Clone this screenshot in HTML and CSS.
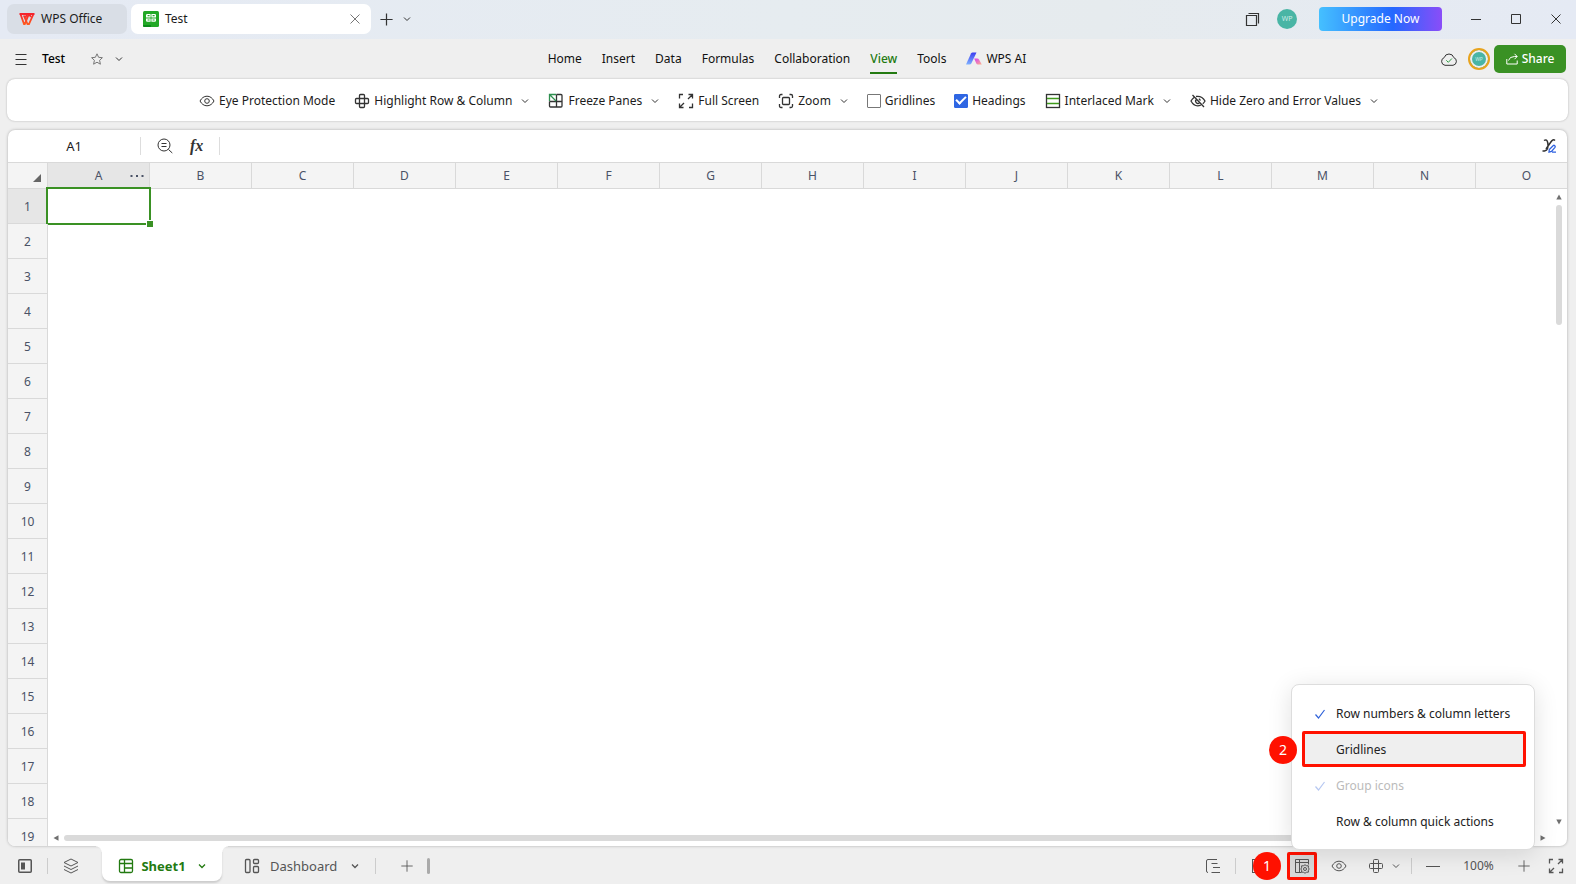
FILE: index.html
```
<!DOCTYPE html>
<html lang="en">
<head>
<meta charset="utf-8">
<title>Test - WPS Office</title>
<link rel="stylesheet" href="styles.css">
</head>
<body>
<svg class="sprite" aria-hidden="true">
  <defs>
    <linearGradient id="g-wps" x1="0" y1="0" x2="0" y2="1"><stop offset="0" stop-color="#f5222d"/><stop offset="1" stop-color="#ff5a1f"/></linearGradient>
    <linearGradient id="g-ai" x1="0" y1="0" x2="0" y2="1"><stop offset="0" stop-color="#3a3cf0"/><stop offset="1" stop-color="#7fb2ff"/></linearGradient>
    <linearGradient id="g-ai2" x1="0" y1="0" x2="1" y2="1"><stop offset="0" stop-color="#d63cf5"/><stop offset="1" stop-color="#ffb38a"/></linearGradient>
  </defs>
  <symbol id="chev" viewBox="0 0 8 8"><path d="M1 2.500 4 5.500 7 2.500"/></symbol>
  <symbol id="eye" viewBox="0 0 16 16"><path d="M1 8C2.600 5 5 3.200 8 3.200S13.400 5 15 8C13.400 11 11 12.800 8 12.800S2.600 11 1 8Z"/><circle cx="8" cy="8" r="2.300"/></symbol>
  <symbol id="cross" viewBox="0 0 16 16"><rect x="5.500" y="1.500" width="5" height="13" rx="1"/><rect x="1.500" y="5.500" width="13" height="5" rx="1"/></symbol>
  <symbol id="full" viewBox="0 0 16 16"><path d="M1.500 5.500v-4H5M10.500 1.500h4v4M14.300 1.700 10 6M14.500 10.500v4H11M5.500 14.500h-4v-4M1.700 14.300 6 10"/></symbol>
  <symbol id="plus" viewBox="0 0 16 16"><path d="M8 1.500v13M1.500 8h13"/></symbol>
  <symbol id="check" viewBox="0 0 12 12"><path d="M1.500 6.500 4.500 10 10.500 2"/></symbol>
</svg>

<div class="app">
  <header class="titlebar">
    <button class="tab home-tab" type="button">
      <svg class="i16" viewBox="0 0 16 16"><path d="M.500 3H15.500M1.500 3 5 13H5.800L9.500 4M4.800 4.500 8.500 13H10L14.500 3M6.500 6.500 8 3M11.800 6 10.300 3" fill="none" stroke="url(#g-wps)" stroke-width="1.800"/></svg>
      WPS Office
    </button>
    <div class="tab file-tab">
      <svg class="i16 solid" viewBox="0 0 16 16"><rect width="16" height="16" rx="1.500" fill="#22a826"/><path d="M0 14h8v2H1.500Q0 16 0 15Z" fill="#0c8a1a"/><path d="M3 4.200Q3 3 4.200 3H7.600V6.400H3ZM8.400 3H11.800Q13 3 13 4.200V6.400H8.400ZM3 7.400H7.600V10.800H4.200Q3 10.800 3 9.600ZM8.400 7.400H13V9.600Q13 10.800 11.800 10.800H8.400Z" fill="#fff"/><path d="M4.600 4.700h2M9.600 4.700h2M4.600 9h2M9.600 9h2" class="green-line"/></svg>
      <span class="grow">Test</span>
      <button class="plain" type="button" aria-label="Close tab"><svg class="i10 gray" viewBox="0 0 10 10"><path d="M.500.500l9 9M9.500.500l-9 9"/></svg></button>
    </div>
    <button class="plain new-tab" type="button" aria-label="New tab"><svg class="i16 bold"><use href="#plus"/></svg></button>
    <button class="plain" type="button" aria-label="Tab list"><svg class="i8"><use href="#chev"/></svg></button>
    <div class="window-tools">
      <button class="plain" type="button" aria-label="Windows"><svg class="i16" viewBox="0 0 16 16"><path d="M1.500 4.500h10v10h-10zM3.500 2.500h10v10" stroke-width="1.200"/></svg></button>
      <span class="avatar">WP</span>
      <button class="upgrade" type="button">Upgrade Now</button>
      <div class="window-buttons">
        <button class="plain" type="button" aria-label="Minimize"><svg class="i10" viewBox="0 0 10 10"><path d="M0 5.500h10"/></svg></button>
        <button class="plain" type="button" aria-label="Maximize"><svg class="i10" viewBox="0 0 10 10"><path d="M.500.500h9v9h-9z"/></svg></button>
        <button class="plain" type="button" aria-label="Close"><svg class="i10" viewBox="0 0 10 10"><path d="M.500.500l9 9M9.500.500l-9 9"/></svg></button>
      </div>
    </div>
  </header>

  <div class="menubar">
    <div class="doc">
      <button class="plain" type="button" aria-label="Menu"><svg class="i12" viewBox="0 0 12 12"><path d="M.500 1.500h11M.500 6.500h11M.500 11.500h11"/></svg></button>
      <span class="doc-name">Test</span>
      <button class="plain" type="button" aria-label="Favorite"><svg class="i12 gray" viewBox="0 0 12 12"><path d="M6 .800 7.600 4.300 11.400 4.700 8.600 7.300 9.400 11.200 6 9.200 2.600 11.200 3.400 7.300.600 4.700 4.400 4.300Z"/></svg></button>
      <button class="plain doc-more" type="button" aria-label="More"><svg class="i8"><use href="#chev"/></svg></button>
    </div>
    <nav class="menus">
      <a href="#">Home</a><a href="#">Insert</a><a href="#">Data</a><a href="#">Formulas</a><a href="#">Collaboration</a><a href="#" class="active">View</a><a href="#">Tools</a>
      <a href="#" class="ai"><svg class="i16" viewBox="0 0 16 14"><path d="M0 12.500 5 1.500Q5.500 .500 6.700.500H10.500L5.300 11.500Q4.800 12.500 3.500 12.500Z" fill="url(#g-ai)" stroke="none"/><path d="M8.200 6.500h3.100Q12.500 6.500 13 7.500L15.800 12.500H12Q10.800 12.500 10.300 11.500Z" fill="url(#g-ai2)" stroke="none"/></svg>WPS AI</a>
    </nav>
    <div class="account">
      <svg class="cloud" viewBox="0 0 18 16"><path d="M5 14.300a4 4 0 0 1-.800-7.700A5 5 0 0 1 13.800 6.600 4 4 0 0 1 13 14.300Z"/><path d="M6.300 9.300l2 2 3.600-3.800" stroke="#2f9e44"/></svg>
      <span class="avatar ringed">WP</span>
      <button class="share" type="button"><svg class="i12" viewBox="0 0 12 12"><path d="M.800 6v5h10.400V7.500M2.500 7.500Q3.500 3.500 8.500 3.500H11M8.500.800 11.200 3.500 8.500 6.200"/></svg>Share</button>
    </div>
  </div>

  <div class="ribbon">
    <button class="tool" type="button"><svg class="i16"><use href="#eye"/></svg>Eye Protection Mode</button>
    <button class="tool" type="button"><svg class="i16 bold"><use href="#cross"/></svg>Highlight Row &amp; Column<svg class="i8 drop"><use href="#chev"/></svg></button>
    <button class="tool" type="button"><svg class="i16 bold" viewBox="0 0 16 16"><path d="M8.500 1.500H13Q14 1.500 14 2.500V13Q14 14 13 14H2.500Q1.500 14 1.500 13V8.500M1.500 8.500H14M8.500 1.500V14"/><path d="M1.500 8V1.500H8M2 2 8 8" stroke="#2f8f4f"/></svg>Freeze Panes<svg class="i8 drop"><use href="#chev"/></svg></button>
    <button class="tool" type="button"><svg class="i16 bold"><use href="#full"/></svg>Full Screen</button>
    <button class="tool" type="button"><svg class="i16 bold" viewBox="0 0 16 16"><rect x="4.500" y="4.500" width="7" height="7" rx="1"/><path d="M1.500 5V3Q1.500 1.500 3 1.500H4.500M11.500 1.500H13Q14.500 1.500 14.500 3V5M14.500 11V13Q14.500 14.500 13 14.500H11.500M4.500 14.500H3Q1.500 14.500 1.500 13V11"/></svg>Zoom<svg class="i8 drop"><use href="#chev"/></svg></button>
    <label class="tool"><input type="checkbox">Gridlines</label>
    <label class="tool"><input type="checkbox" checked>Headings</label>
    <button class="tool" type="button"><svg class="i16 bold" viewBox="0 0 16 16"><rect x="1.500" y="1.500" width="13" height="13"/><path d="M2 5.500h12M2 10.500h12" stroke="#3f9a1c"/></svg>Interlaced Mark<svg class="i8 drop"><use href="#chev"/></svg></button>
    <button class="tool" type="button"><svg class="i16 bold" viewBox="0 0 16 16"><path d="M4 4.600Q2.200 6 1 8C3.500 12.500 7.500 13.600 11 12M6 3.500Q11.800 2.500 15 8 14.200 9.600 12.800 10.800M2.500 2 14 14M6.300 6.500a2.300 2.300 0 0 0 3.200 3.300M8.800 5.800a2.300 2.300 0 0 1 1.500 1.800"/></svg>Hide Zero and Error Values<svg class="i8 drop"><use href="#chev"/></svg></button>
  </div>

  <main class="sheet">
    <div class="formula-bar">
      <input class="name-box" type="text" value="A1" aria-label="Name box">
      <button class="plain search" type="button" aria-label="Find"><svg class="i16" viewBox="0 0 16 16"><circle cx="7" cy="7" r="6"/><path d="M11.500 11.500 15.300 15M4.500 5.500h5M4.500 8.500h5"/></svg></button>
      <button class="plain fx" type="button">fx</button>
      <input class="formula" type="text" aria-label="Formula">
      <button class="plain" type="button" aria-label="Edit formula"><svg class="i16" viewBox="0 0 16 16"><path d="M3 2.500Q6 .500 6.800 5 8 12 3.500 13H1.500M14 2.500Q12 .500 9.500 4.500L5 11" stroke-width="1.500"/><path d="M8 14.200 8.300 11.500 12.300 7.500Q13 7 13.800 7.700 14.600 8.500 14 9.300L10.500 13.500 8 14.200ZM11 14.200h4" stroke="#2f62e0" stroke-width="1.300"/></svg></button>
    </div>
    <div class="grid-area">
      <table class="grid">
        <thead><tr>
          <th class="corner" scope="col" aria-label="Select all"><svg class="i8" viewBox="0 0 8 8"><path d="M8 0v8H0z" fill="#666" stroke="none"/></svg></th>
          <th class="sel" scope="col">A<button class="plain dots" type="button" aria-label="Column options"><svg viewBox="0 0 14 4"><path d="M.500 1h2v2h-2zM6 1h2v2h-2zM11.500 1h2v2h-2z" fill="#4a5266" stroke="none"/></svg></button></th>
          <th scope="col">B</th><th scope="col">C</th><th scope="col">D</th><th scope="col">E</th><th scope="col">F</th><th scope="col">G</th><th scope="col">H</th><th scope="col">I</th><th scope="col">J</th><th scope="col">K</th><th scope="col">L</th><th scope="col">M</th><th scope="col">N</th><th scope="col">O</th>
        </tr></thead>
        <tbody>
          <tr><th class="sel" scope="row">1</th><td class="cursor"></td><td colspan="14"></td></tr>
          <tr><th scope="row">2</th><td colspan="15"></td></tr>
          <tr><th scope="row">3</th><td colspan="15"></td></tr>
          <tr><th scope="row">4</th><td colspan="15"></td></tr>
          <tr><th scope="row">5</th><td colspan="15"></td></tr>
          <tr><th scope="row">6</th><td colspan="15"></td></tr>
          <tr><th scope="row">7</th><td colspan="15"></td></tr>
          <tr><th scope="row">8</th><td colspan="15"></td></tr>
          <tr><th scope="row">9</th><td colspan="15"></td></tr>
          <tr><th scope="row">10</th><td colspan="15"></td></tr>
          <tr><th scope="row">11</th><td colspan="15"></td></tr>
          <tr><th scope="row">12</th><td colspan="15"></td></tr>
          <tr><th scope="row">13</th><td colspan="15"></td></tr>
          <tr><th scope="row">14</th><td colspan="15"></td></tr>
          <tr><th scope="row">15</th><td colspan="15"></td></tr>
          <tr><th scope="row">16</th><td colspan="15"></td></tr>
          <tr><th scope="row">17</th><td colspan="15"></td></tr>
          <tr><th scope="row">18</th><td colspan="15"></td></tr>
          <tr><th scope="row">19</th><td colspan="15"></td></tr>
        </tbody>
      </table>
      <div class="vscroll"><svg class="arrow" viewBox="0 0 6 6"><path d="M3 .500 5.700 5.500H.300Z"/></svg><span class="vthumb"></span><svg class="arrow" viewBox="0 0 6 6"><path d="M3 5.500.300.500h5.400Z"/></svg></div>
      <div class="hscroll"><svg class="arrow" viewBox="0 0 6 6"><path d="M.500 3 5.500.300v5.400Z"/></svg><span class="hthumb"></span><svg class="arrow" viewBox="0 0 6 6"><path d="M5.500 3 .500.300v5.400Z"/></svg></div>
    </div>
  </main>

  <footer class="statusbar">
    <div class="sheet-tools">
      <button class="plain" type="button" aria-label="Side pane"><svg class="i14" viewBox="0 0 14 14"><rect x=".750" y=".750" width="12.500" height="12.500" rx="1" stroke-width="1.500"/><path d="M3 3.500h4v7H3z" fill="#555" stroke="none"/></svg></button>
      <span class="sep"></span>
      <button class="plain" type="button" aria-label="Sheet list"><svg class="i16" viewBox="0 0 16 16"><path d="M8 1 15 4.500 8 8 1 4.500ZM1 8l7 3.500L15 8M1 11.500 8 15l7-3.500"/></svg></button>
    </div>
    <button class="sheet-tab" type="button"><svg class="i16" viewBox="0 0 16 16"><rect x="1.500" y="1.500" width="13" height="13" rx="1.500"/><path d="M1.500 5.500h13M6.500 1.500v13M6.500 10h8"/></svg>Sheet1<svg class="i8"><use href="#chev"/></svg></button>
    <button class="dash-tab" type="button"><svg class="i16" viewBox="0 0 16 16"><rect x="1.500" y="1.500" width="4.500" height="13" rx="1"/><rect x="9.500" y="1.500" width="5" height="4" rx="1"/><rect x="9.500" y="8.500" width="5" height="6" rx="1"/></svg>Dashboard<svg class="i8"><use href="#chev"/></svg></button>
    <span class="sep"></span>
    <button class="plain add" type="button" aria-label="Add sheet"><svg class="i14"><use href="#plus" width="14" height="14"/></svg></button>
    <span class="grip"></span>
    <div class="view-tools">
      <button class="plain" type="button" aria-label="Outline"><svg class="i16" viewBox="0 0 16 16"><path d="M12 1.500H3Q1.500 1.500 1.500 3V13Q1.500 14.500 3 14.500M6.500 5.500h6M8 9.500h7M6.500 14.500h8.500"/></svg></button>
      <span class="sep"></span>
      <button class="plain normal-view" type="button" aria-label="Normal view"><svg class="i16" viewBox="0 0 16 16"><rect x="1.500" y="1.500" width="13" height="13"/></svg><span class="badge">1</span></button>
      <button class="display-btn" type="button" aria-label="Display settings"><svg class="i16" viewBox="0 0 16 16"><path d="M14.500 6.500V1.500H1.500V14.500H7.500M1.500 4.500h13M5.500 1.500v13"/><path d="M11 6.800l1.700 1h1.700v2l.800 1.200-.800 1.200v2h-1.700l-1.700 1-1.700-1H7.600v-2L6.800 11l.800-1.200v-2h1.700Z"/><circle cx="11" cy="11" r="1.500"/></svg></button>
      <button class="plain" type="button" aria-label="Eye protection"><svg class="i16"><use href="#eye"/></svg></button>
      <button class="plain duo" type="button" aria-label="Highlight"><svg class="i16"><use href="#cross"/></svg><svg class="i8"><use href="#chev"/></svg></button>
      <span class="sep"></span>
      <button class="plain zoom-out" type="button" aria-label="Zoom out"><svg class="i14" viewBox="0 0 14 14"><path d="M0 7.500h14"/></svg></button>
      <span class="zoom">100%</span>
      <button class="plain zoom-in" type="button" aria-label="Zoom in"><svg class="i14"><use href="#plus" width="14" height="14"/></svg></button>
      <button class="plain fullscreen" type="button" aria-label="Full screen"><svg class="i16 bold"><use href="#full"/></svg></button>
    </div>
  </footer>

  <div class="popup" role="menu">
    <button type="button" role="menuitem"><svg class="i12 blue"><use href="#check"/></svg>Row numbers &amp; column letters</button>
    <button type="button" role="menuitem" class="marked"><span class="badge">2</span><span class="blank"></span>Gridlines</button>
    <button type="button" role="menuitem" disabled><svg class="i12 blue"><use href="#check"/></svg>Group icons</button>
    <button type="button" role="menuitem"><span class="blank"></span>Row &amp; column quick actions</button>
  </div>
</div>
</body>
</html>
```
FILE: styles.css
```
* { box-sizing: border-box; }
body { margin: 0; background: #efefef; color: #1c1c1c; font: 12px/18px "Noto Sans", "Open Sans", sans-serif; }
button, input { font: inherit; color: inherit; margin: 0; }
button { border: 0; background: none; padding: 0; }
svg { flex: none; display: block; fill: none; stroke: #333; stroke-width: 1; }
.sprite { position: absolute; width: 0; height: 0; }
.i8 { width: 8px; height: 8px; }
.i10 { width: 10px; height: 10px; }
.i12 { width: 12px; height: 12px; }
.i14 { width: 14px; height: 14px; }
.i16 { width: 16px; height: 16px; }
.bold { stroke-width: 1.3; }
.gray { stroke: #777; }
.solid { stroke: none; }
.green-line { stroke: #22a826; stroke-width: 1.2; }
.blue { stroke: #2f62d9; stroke-width: 1.2; }
.plain { display: flex; align-items: center; justify-content: center; }
.grow { flex: 1; text-align: left; }

.app { position: relative; display: flex; flex-direction: column; height: 100vh; overflow: hidden; }

.titlebar { display: flex; align-items: center; height: 39px; padding: 0 8px 1px 7px; background: linear-gradient(90deg, #e5eaf4, #e6ecf0 50%, #e6ebee 70%, #e5eaf4); }
.tab { display: flex; align-items: center; height: 30px; border-radius: 7px; }
.home-tab { width: 120px; padding-left: 12px; gap: 6px; background: #d9dee6; }
.file-tab { width: 240px; margin-left: 4px; padding: 0 11px 0 12px; gap: 6px; background: #fff; }
.new-tab { margin: 0 9px 0 8px; }
.new-tab .i16 { width: 15px; height: 15px; }
.window-tools { display: flex; align-items: center; margin-left: auto; }
.avatar { display: flex; align-items: center; justify-content: center; width: 20px; height: 20px; margin: 0 22px 0 16px; border-radius: 50%; background: #49b5a5; color: #c9ece6; font-size: 7px; }
.upgrade { width: 123px; height: 24px; border-radius: 4px; color: #fff; background: linear-gradient(90deg, #45c0ff, #2468ff 60%, #8a4df8); }
.window-buttons { display: flex; gap: 30px; margin: 0 7px 0 29px; }

.menubar { display: grid; grid-template-columns: 1fr auto 1fr; align-items: center; height: 40px; padding: 0 10px 0 8px; }
.doc { display: flex; align-items: center; padding-left: 7px; }
.doc-name { margin: 0 26px 0 15px; color: #000; font-size: 12px; font-weight: 500; }
.doc-more { margin-left: 12px; }
.menus { display: flex; gap: 20px; }
.menus a { display: flex; align-items: center; gap: 4px; height: 30px; padding-top: 1px; color: #111; text-decoration: none; border-bottom: 2px solid transparent; }
.menus .active { color: #237a11; font-weight: 500; border-bottom-color: #237a11; }
.account { display: flex; align-items: center; justify-content: flex-end; }
.cloud { width: 18px; height: 16px; }
.ringed { width: 22px; height: 22px; margin: 0 4px 0 10px; border: 2px solid #e8a31d; box-shadow: inset 0 0 0 2px #efefef; font-size: 5px; }
.share { display: flex; align-items: center; justify-content: center; gap: 4px; width: 72px; height: 28px; border-radius: 5px; color: #fff; background: #3a9124; font-weight: 500; }
.share svg { stroke: #fff; }

.ribbon { display: flex; align-items: center; justify-content: center; gap: 19px; height: 42px; margin: 0 8px 0 7px; padding: 1px 0 0 2px; border-radius: 8px; background: #fff; box-shadow: 0 0 2px #aaa; }
.tool { display: flex; align-items: center; gap: 4px; white-space: nowrap; }
.drop { margin-left: 5px; }
.tool input { appearance: none; width: 14px; height: 14px; border: 1px solid #777; border-radius: 1px; background: #fff; }
.tool input:checked { display: grid; place-items: center; border-color: #2f66e3; background: #2f66e3; }
.tool input:checked::after { content: ""; width: 8px; height: 4px; margin-bottom: 3px; border: solid #fff; border-width: 0 0 2px 2px; transform: rotate(-45deg); }

.sheet { display: flex; flex: 1; flex-direction: column; min-height: 0; margin: 9px 9px 0 8px; overflow: hidden; border-radius: 7px; background: #fff; box-shadow: 0 0 3px #aaa; }
.formula-bar { display: flex; align-items: center; flex: none; height: 32px; padding-right: 10px; }
.name-box { width: 133px; height: 18px; border: 0; border-right: 1px solid #ddd; padding: 0; text-align: center; outline: 0; font-size: 13px; background: none; }
.search { margin: 0 17px 0 16px; }
.fx { padding-right: 16px; height: 18px; border-right: 1px solid #ddd; font: italic bold 16px/16px "Liberation Serif", serif; color: #333; }
.formula { flex: 1; border: 0; outline: 0; background: none; }
.grid-area { position: relative; flex: 1; min-height: 0; overflow: hidden; border-top: 1px solid #d9d9d9; }
.grid { table-layout: fixed; width: 1570px; border-collapse: separate; border-spacing: 0; }
.grid th { position: relative; height: 35px; padding: 2px 0 0; border: solid #d9d9d9; border-width: 0 1px 1px 0; background: #f4f4f4; color: #4a5266; font-weight: 400; }
.grid thead th { height: 26px; width: 102px; padding: 0; }
.grid thead .corner { width: 40px; padding: 4px 0 0 25px; }
.grid th.sel { background: #e6e6e6; }
.grid td { padding: 0; }
.dots { position: absolute; right: 5px; top: 11px; }
.dots svg { width: 14px; height: 4px; }
.cursor { position: relative; }
.cursor::before { content: ""; position: absolute; inset: -2px -1px -1px -2px; border: 2px solid #3a9124; }
.cursor::after { content: ""; position: absolute; right: -3px; bottom: -3px; width: 6px; height: 6px; border: 1px solid #fff; border-width: 1px 0 0 1px; background: #3a9124; }
.arrow { width: 6px; height: 6px; fill: #707070; stroke: none; }
.vscroll { position: absolute; top: 31px; right: 5px; bottom: 21px; display: flex; flex-direction: column; align-items: center; gap: 5px; }
.vthumb { width: 6px; height: 120px; margin-bottom: auto; border-radius: 3px; background: #dadada; }
.hscroll { position: absolute; left: 45px; right: 21px; bottom: 5px; display: flex; align-items: center; gap: 5px; }
.hthumb { flex: 1; height: 6px; margin-right: 60px; border-radius: 3px; background: #dadada; }

.statusbar { display: flex; align-items: center; height: 38px; padding: 2px 12px 0 18px; color: #555; }
.statusbar svg { stroke: #555; }
.sep { width: 1px; height: 16px; background: #ccc; }
.sheet-tools { display: flex; align-items: center; width: 84px; gap: 15px; }
.sheet-tab { position: relative; display: flex; align-items: center; justify-content: center; gap: 7px; align-self: flex-start; width: 120px; height: 35px; margin-top: -2px; padding-top: 4px; border-radius: 0 0 8px 8px; background: #fff; box-shadow: 0 2px 2px #ccc; color: #237a11; font-size: 13px; font-weight: 700; }
.sheet-tab::before, .sheet-tab::after { content: ""; position: absolute; top: 0; width: 6px; height: 6px; }
.sheet-tab::before { right: 100%; background: radial-gradient(circle at 0 100%, transparent 5px, #fff 6px); }
.sheet-tab::after { left: 100%; background: radial-gradient(circle at 100% 100%, transparent 5px, #fff 6px); }
.statusbar .sheet-tab svg { stroke: #237a11; stroke-width: 1.3; }
.sheet-tab .i8 { margin-left: 5px; }
.dash-tab { display: flex; align-items: center; gap: 10px; margin: 0 16px 0 22px; font-size: 13px; }
.statusbar .dash-tab svg { stroke-width: 1.3; }
.dash-tab .i8 { margin-left: 4px; }
.add { margin: 0 13px 0 24px; }
.grip { width: 3px; height: 16px; border-radius: 2px; background: #aaa; }
.view-tools { display: flex; align-items: center; margin-left: auto; }
.view-tools > .sep { margin: 0 14px; }
.normal-view { position: relative; width: 18px; margin-right: 19px; }
.normal-view .badge { left: 3px; top: -6px; }
.display-btn { display: flex; align-items: center; justify-content: center; width: 30px; height: 28px; margin-right: 14px; border: 3px solid #f10; border-radius: 2px; background: #d8d8d8; }
.badge { position: absolute; display: flex; align-items: center; justify-content: center; width: 28px; height: 28px; border-radius: 50%; background: #f10; color: #fff; font-size: 14px; }
.duo { gap: 8px; margin-left: 21px; margin-right: -3px; }
.zoom { width: 77px; text-align: center; }
.fullscreen { margin-left: 17px; }

.popup { position: absolute; right: 41px; bottom: 34px; width: 244px; padding: 10px 8px 10px 10px; border: 1px solid #ddd; border-radius: 8px; background: #fff; box-shadow: 0 4px 24px rgba(0, 0, 0, .12); color: #222; }
.popup button { position: relative; display: flex; align-items: center; gap: 10px; width: 100%; height: 36px; padding: 2px 0 0 12px; white-space: nowrap; }
.popup .marked { padding-left: 9px; border: 3px solid #f10; border-radius: 2px; background: #efefef; }
.popup .badge { left: -36px; top: 2px; }
.popup :disabled { color: #bbb; }
.popup :disabled svg { opacity: .35; }
.blank { width: 12px; }
```
